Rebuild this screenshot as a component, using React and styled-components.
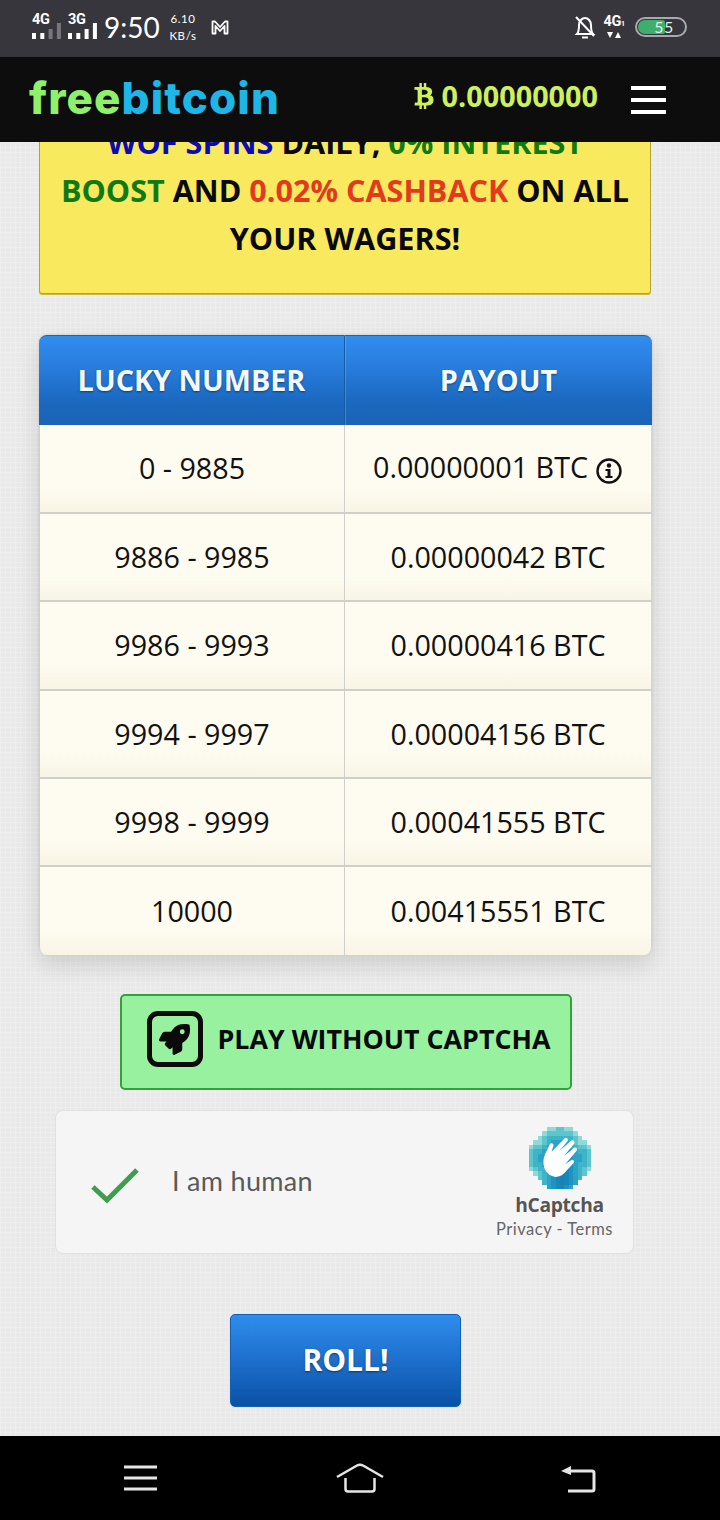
import React from "react";
import styled, { createGlobalStyle } from "styled-components";
import { FaBtc, FaRocket } from "react-icons/fa";

const Global = createGlobalStyle`
  html, body { margin: 0; padding: 0; background: #000; }
  * { box-sizing: border-box; }
  body { font-family: "Open Sans", "Liberation Sans", sans-serif; }
`;

const Phone = styled.div`
  width: 720px; height: 1520px; display: flex; flex-direction: column; overflow: hidden;
`;
const StatusBar = styled.div`
  height: 57px; flex: none; background: #36363c; color: #fff; display: flex; align-items: center;
  padding: 0 33px 3px 32px; justify-content: space-between;
`;
const StatusGroup = styled.div`display: flex; align-items: center;`;
const SignalWrap = styled.div`display: flex; flex-direction: column; align-items: flex-start; width: 29px; height: 25px; margin-right: ${p => p.$gap}px; margin-top: -1px;`;
const SignalLabel = styled.span`font: 700 14.5px/12px "Roboto", sans-serif; letter-spacing: -.3px; height: 9px;`;
const Clock = styled.span`font: 400 28px/32px "Lato", sans-serif; margin-right: 11px; width: 54px;`;
const Speed = styled.span`font: 400 11.5px/17px "Lato", sans-serif; display: flex; flex-direction: column; align-items: center; width: 28px; margin-right: 14px; letter-spacing: .6px;`;
const NetWrap = styled.div`display: flex; flex-direction: column; align-items: center; margin: 0 10px 0 7px; width: 22px;`;
const NetLabel = styled.span`font: 700 14.5px/14px "Roboto", sans-serif; letter-spacing: -.4px; white-space: nowrap;`;
const Battery = styled.div`
  position: relative; width: 52px; height: 20px; border: 2px solid #a9a9ad; border-radius: 10px; overflow: hidden;
  display: flex; align-items: center; justify-content: center; padding-left: 6px;
`;
const BatteryFill = styled.div`position: absolute; inset: 1px auto 1px 1px; width: 27px; background: #3fae6c; border-radius: 8px 3px 3px 8px;`;
const BatteryText = styled.span`position: relative; font: 400 16px/16px "Lato", sans-serif; color: #dff3e6; letter-spacing: .5px;`;

const Header = styled.header`
  height: 85px; flex: none; background: #0d0d0e; display: flex; align-items: center; padding: 0 54px 0 29px; position: relative; z-index: 2;
`;
const Logo = styled.div`
  font: 800 44px/1 "Inter", "Open Sans", sans-serif; letter-spacing: 1.1px; color: #8ff06a; margin-top: -3px;
`;
const LogoBlue = styled.span`color: #1eb6e6;`;
const Balance = styled.div`
  margin-left: auto; display: flex; align-items: center; gap: 5px; color: #cdf05c; font: 700 28.8px/1 "Open Sans", sans-serif; margin-right: 33px; margin-top: -7px;
`;
const Burger = styled.div`
  width: 35px; display: flex; flex-direction: column; gap: 8px;
`;
const BurgerBar = styled.span`display: block; height: 4px; background: #fff;`;

const Main = styled.main`
  flex: 1; min-height: 0; overflow: hidden; display: flex; flex-direction: column; align-items: flex-start;
  background-color: #e9e9e9;
  background-image: linear-gradient(#eeeeee 1px, transparent 1px), linear-gradient(90deg, #eeeeee 1px, transparent 1px);
  background-size: 5px 5px;
`;
const Banner = styled.div`
  width: 612px; margin: -25px 0 0 39px; padding: 0 18px 31px; background: #f9e95f; border: 1px solid #b3a52a; border-radius: 0 0 3px 3px;
  box-shadow: 0 1px 0 #cabc3a;
  text-align: center; font: 700 30.6px/48px "Open Sans", sans-serif; color: #0a0a0a;
`;
const Accent = styled.span`color: ${p => p.$c};`;

const Table = styled.table`
  width: 613px; margin: 41px 0 0 39px; border-collapse: separate; border-spacing: 0; table-layout: fixed;
  border-radius: 8px; box-shadow: 0 10px 22px rgba(0,0,0,.13), 0 -1px 3px rgba(0,0,0,.08);
`;
const HeadFirst = styled.col`width: 305px;`;
const Th = styled.th`
  height: 90px; padding: 0; font: 700 28.8px/1 "Open Sans", sans-serif; color: #f2f8fd; text-shadow: 0 1px 2px rgba(0,0,0,.45);
  background: linear-gradient(#308dee 0%, #2a7fdf 30%, #1a68bf 75%, #1b64b6 100%);
  border-top: 1px solid #1c63b0;
  border-left: ${p => p.$first ? "none" : "1px solid #175a9f"};
  box-shadow: ${p => p.$first ? "none" : "inset 1px 0 0 rgba(255,255,255,.18)"};
  border-radius: ${p => p.$first ? "8px 0 0 0" : "0 8px 0 0"};
`;
const Td = styled.td`
  height: ${p => p.$h}px; padding: 0; text-align: center; font: 400 28.7px/1 "Open Sans", sans-serif; color: #111;
  background: linear-gradient(#fefcf0 0%, #fefcf0 70%, #f8f5e6 100%);
  border-bottom: ${p => p.$last ? "none" : "2px solid #d0d0cb"};
  border-left: 1px solid #d0d0cb;
  border-right: ${p => p.$first ? "none" : "1px solid #d6d6d2"};
  border-radius: ${p => !p.$last ? "0" : p.$first ? "0 0 0 8px" : "0 0 8px 0"};
`;
const InfoIcon = styled.svg`width: 28px; height: 28px; vertical-align: -7px; margin-left: 7px;`;

const PlayButton = styled.div`
  width: 452px; height: 96px; margin: 39px 0 0 119.5px; display: flex; align-items: center; gap: 15px; padding: 0 0 6px 25px;
  background: #98f19e; border: 2px solid #35a238; border-radius: 5px; color: #0a0a0a; font: 700 26.8px/1 "Open Sans", sans-serif; white-space: nowrap;
`;
const RocketBox = styled.div`
  width: 56px; height: 56px; flex: none; border: 5px solid #0a0a0a; border-radius: 11px; display: flex; align-items: center; justify-content: center; font-size: 31px;
`;

const Captcha = styled.div`
  width: 579px; height: 144px; margin: 20px 0 0 55px; background: #f5f5f5; border: 1px solid #e0e0e0; border-radius: 8px;
  display: flex; align-items: center; padding: 0 20px 0 35px;
`;
const Check = styled.svg`width: 48px; height: 38px; margin-top: 7px; flex: none;`;
const HumanText = styled.span`
  font: 400 27px/1 "Lato", sans-serif; color: #5a5a5a; margin-left: 33px; margin-top: -4px; letter-spacing: .3px;
`;
const CaptchaBrand = styled.div`margin-left: auto; display: flex; flex-direction: column; align-items: center;`;
const CaptchaMark = styled.svg`width: 62px; height: 62px; margin-left: 10px;`;
const CaptchaName = styled.div`font: 700 19.200px/22px "Open Sans", sans-serif; color: #555; margin: 5px 0 0 10px; letter-spacing: -.3px;`;
const CaptchaLinks = styled.div`font: 400 16.500px/18px "Lato", sans-serif; color: #666; margin-top: 4px; letter-spacing: .5px; white-space: nowrap;`;

const RollButton = styled.div`
  width: 231px; height: 93px; margin: 60px 0 0 230px; padding-bottom: 2px; display: flex; align-items: center; justify-content: center;
  background: linear-gradient(#2f8cec 0%, #1f72cf 45%, #0a51a6 100%);
  border: 1px solid #1460b0; border-radius: 5px; color: #fff; font: 700 30px/1 "Open Sans", sans-serif; text-shadow: 0 1px 2px rgba(0,0,0,.5);
  box-shadow: 0 0 0 1px #d6e9fb;
`;

const NavBar = styled.nav`
  height: 84px; flex: none; background: #000; display: flex; align-items: center; justify-content: space-between; padding: 0 122px 0 122px;
`;
const NavIcon = styled.svg`width: 38px; height: 30px; display: block;`;
const HomeIcon = styled.svg`width: 50px; height: 32px; display: block;`;

const rows = [
  ["0 - 9885", "0.00000001 BTC", true, 89],
  ["9886 - 9985", "0.00000042 BTC", false, 88],
  ["9986 - 9993", "0.00000416 BTC", false, 89],
  ["9994 - 9997", "0.00004156 BTC", false, 88],
  ["9998 - 9999", "0.00041555 BTC", false, 88],
  ["10000", "0.00415551 BTC", false, 88],
];

const mosaic = [
  "....aabbaa....",
  "...abbbbbba...",
  "..abccccccba..",
  ".aabcddddcbaa.",
  "abbcdddddccbba",
  "bccdeeffeedccb",
  "bcddeeffeeddcb",
  "bcddeeffeeddcb",
  "bccdeeffeedccb",
  "abccdefgfedcba",
  ".abcdefgfedcb.",
  "..bcdefgfedc..",
  "...cdefgfed...",
  "....deffed....",
];
const tile = { a: "#8fdad8", b: "#5cc6cc", c: "#3fb4c8", d: "#2aa3c6", e: "#1c93c0", f: "#1688b8", g: "#1a80b5" };

const signalBars = [6, 6, 10, 16];

function Signal({ full }) {
  return (
    <svg width="29" height="16" viewBox="0 0 29 16">
      {signalBars.map((h, i) => (
        <rect key={i} x={i * 8.300} y={16 - h} width="4" height={h} fill={!full && i > 1 ? "#77777b" : "#fff"} />
      ))}
    </svg>
  );
}

export default function App() {
  return (
    <Phone>
      <Global />
      <StatusBar>
        <StatusGroup>
          <SignalWrap $gap={7}><SignalLabel>4G</SignalLabel><Signal /></SignalWrap>
          <SignalWrap $gap={7}><SignalLabel>3G</SignalLabel><Signal full /></SignalWrap>
          <Clock>9:50</Clock>
          <Speed><span>6.10</span><span>KB/s</span></Speed>
          <svg width="18" height="15" viewBox="0 0 18 15" fill="none" stroke="#fff" strokeWidth="1.800" strokeLinejoin="round">
            <path d="M1.500 1.500h2.500L9 7l5-5.500h2.500v12h-3V6L9 11 4.500 6v7.500h-3z" />
          </svg>
        </StatusGroup>
        <StatusGroup>
          <svg width="22" height="26" viewBox="0 0 22 26" fill="none" stroke="#fff" strokeWidth="2">
            <path d="M3 20c2-2 2-4 2-9 0-4 3-7 6-7s6 3 6 7c0 5 0 7 2 9z" />
            <path d="M8 23.500h6" />
            <path d="M2 3l18 19" />
          </svg>
          <NetWrap>
            <NetLabel>4G<small style={{ fontSize: 7 }}>1</small></NetLabel>
            <svg width="16" height="8" viewBox="0 0 16 8" fill="#fff"><path d="M1 1h6L4 7z" /><path d="M9 7h6l-3-6z" /></svg>
          </NetWrap>
          <Battery><BatteryFill /><BatteryText>55</BatteryText></Battery>
        </StatusGroup>
      </StatusBar>

      <Header>
        <Logo>free<LogoBlue>bitcoin</LogoBlue></Logo>
        <Balance><FaBtc size={26} /><span>0.00000000</span></Balance>
        <Burger><BurgerBar /><BurgerBar /><BurgerBar /></Burger>
      </Header>

      <Main>
        <Banner>
          <Accent $c="#0b0bb0">WOF SPINS</Accent> DAILY, <Accent $c="#0f7a0f">0% INTEREST BOOST</Accent> AND{" "}
          <Accent $c="#e23a1e">0.02% CASHBACK</Accent> ON ALL YOUR WAGERS!
        </Banner>

        <Table>
          <colgroup><HeadFirst /><col /></colgroup>
          <thead>
            <tr><Th $first>LUCKY NUMBER</Th><Th>PAYOUT</Th></tr>
          </thead>
          <tbody>
            {rows.map(([range, pay, info, h], i) => (
              <tr key={range}>
                <Td $first $h={h} $last={i === rows.length - 1}>{range}</Td>
                <Td $h={h} $last={i === rows.length - 1}>
                  {pay}
                  {info && (
                    <InfoIcon viewBox="0 0 28 28">
                      <circle cx="14" cy="14" r="11.500" fill="none" stroke="#111" strokeWidth="2.400" />
                      <circle cx="14" cy="8.500" r="2.200" fill="#111" />
                      <path d="M10.500 12h5v7h2v2h-7v-2h2v-5h-2z" fill="#111" />
                    </InfoIcon>
                  )}
                </Td>
              </tr>
            ))}
          </tbody>
        </Table>

        <PlayButton>
          <RocketBox><FaRocket /></RocketBox>
          PLAY WITHOUT CAPTCHA
        </PlayButton>

        <Captcha>
          <Check viewBox="0 0 48 38" fill="none" stroke="#3f9c50" strokeWidth="5">
            <path d="M2 20l14 13L46 3" />
          </Check>
          <HumanText>I am human</HumanText>
          <CaptchaBrand>
            <CaptchaMark viewBox="0 0 14 14" shapeRendering="crispEdges">
              {mosaic.flatMap((row, y) => row.split("").map((c, x) => c !== "." && (
                <rect key={`${x}-${y}`} x={x} y={y} width="1" height="1" fill={tile[c]} />
              )))}
              <path shapeRendering="auto" fill="#fff" d="M4.200 10.400C3.100 9.300 3 7.400 3.700 6L4.700 3.900c.3-.5 1-.2.8.4l-.4 1.300 2.900-3c.4-.4 1 .1.700.6L6.800 5.500l2.700-2.400c.4-.4 1 .2.700.6L8 6.500l2.200-1.800c.4-.3.900.2.600.6L8.200 8.400l1.300-.9c.4-.3.900.3.500.7l-2 2.200c-1.200 1.200-2.800 1.100-3.800 0z" />
            </CaptchaMark>
            <CaptchaName>hCaptcha</CaptchaName>
            <CaptchaLinks>Privacy - Terms</CaptchaLinks>
          </CaptchaBrand>
        </Captcha>

        <RollButton>ROLL!</RollButton>
      </Main>

      <NavBar>
        <NavIcon viewBox="0 0 38 30" fill="none" stroke="#e6e6e6" strokeWidth="3">
          <path d="M2 4h33M2 15h33M2 26h33" />
        </NavIcon>
        <HomeIcon viewBox="0 0 50 32" fill="none" stroke="#e6e6e6" strokeWidth="2.500" strokeLinejoin="round">
          <path d="M2 15L22 3.500q3-1.500 6 0L48 15" />
          <path d="M10.500 16v11q0 2.500 2.500 2.500h24q2.500 0 2.500-2.500V16" />
        </HomeIcon>
        <NavIcon viewBox="0 0 38 30" fill="none" stroke="#e6e6e6" strokeWidth="3">
          <path d="M6 8h26q2 0 2 2v16q0 2-2 2H8" />
          <path d="M1 8l10-5v9z" fill="#e6e6e6" stroke="none" />
        </NavIcon>
      </NavBar>
    </Phone>
  );
}
